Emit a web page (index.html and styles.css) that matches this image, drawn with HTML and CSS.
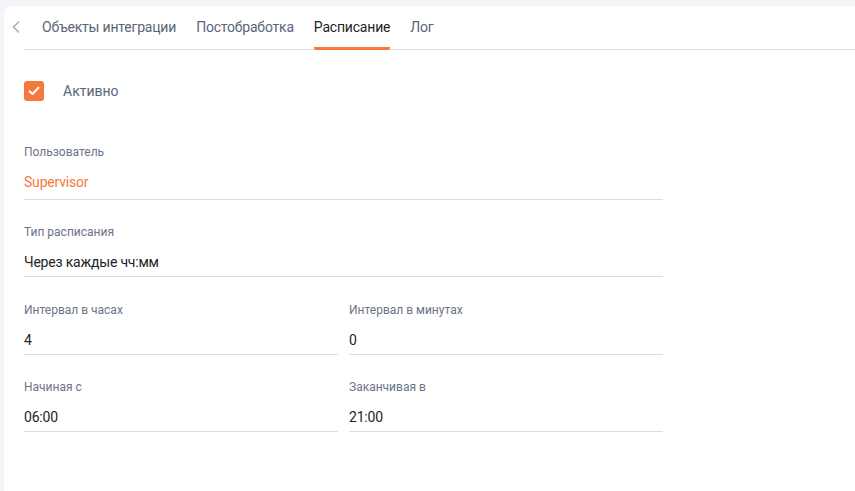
FILE: index.html
```html
<!DOCTYPE html>
<html lang="ru">
<head>
  <meta charset="UTF-8" />
  <title>Расписание</title>
  <link rel="stylesheet" href="styles.css">
</head>
<body>
  <div class="card">
    <div class="tabs-bar">
      <button class="tabs-back" type="button">
        <svg width="8" height="12" viewBox="0 0 8 12"><path d="M6.5 1 L1.5 6 L6.5 11" fill="none" stroke="#a9adb6" stroke-width="1.6" stroke-linecap="round" stroke-linejoin="round"/></svg>
      </button>
      <div class="tabs">
        <div class="tab">Объекты интеграции</div>
        <div class="tab">Постобработка</div>
        <div class="tab active">Расписание</div>
        <div class="tab">Лог</div>
      </div>
    </div>

    <div class="content">
      <label class="check">
        <span class="check-box">
          <svg width="12" height="10" viewBox="0 0 12 10"><path d="M1.5 5.2 L4.5 8 L10.5 1.8" fill="none" stroke="#fff" stroke-width="2" stroke-linecap="round" stroke-linejoin="round"/></svg>
        </span>
        <span class="check-label">Активно</span>
      </label>

      <div class="form">
        <div class="field select">
          <div class="field-label">Пользователь</div>
          <div class="field-value accent">Supervisor</div>
        </div>

        <div class="field">
          <div class="field-label">Тип расписания</div>
          <div class="field-value">Через каждые чч:мм</div>
        </div>

        <div class="row first-row">
          <div class="field">
            <div class="field-label">Интервал в часах</div>
            <div class="field-value">4</div>
          </div>
          <div class="field">
            <div class="field-label">Интервал в минутах</div>
            <div class="field-value">0</div>
          </div>
        </div>

        <div class="row">
          <div class="field">
            <div class="field-label">Начиная с</div>
            <div class="field-value">06:00</div>
          </div>
          <div class="field">
            <div class="field-label">Заканчивая в</div>
            <div class="field-value">21:00</div>
          </div>
        </div>
      </div>
    </div>
  </div>
</body>
</html>
```

FILE: styles.css
```css
body {
  margin: 0;
  background: #f4f5f9;
  font-family: Roboto, 'Liberation Sans', sans-serif;
  color: #1f2329;
}
.card {
  margin: 6px 0 0 4px;
  background: #fff;
  border-top-left-radius: 8px;
  min-height: 500px;
}
.tabs-bar {
  display: flex;
  align-items: stretch;
}
.tabs-back {
  width: 20px;
  padding: 0 0 3px 8px;
  border: none;
  background: none;
  display: flex;
  align-items: center;
  height: 44px;
  cursor: pointer;
}
.tabs {
  flex: 1;
  display: flex;
  gap: 20px;
  padding-left: 18px;
  border-bottom: 1px solid #dcdcdf;
}
.tab {
  font-size: 14px;
  line-height: 20px;
  letter-spacing: -0.2px;
  padding: 11px 0 9px;
  margin-bottom: -1px;
  border-bottom: 3px solid transparent;
  color: #5b6578;
  cursor: pointer;
}
.tab.active {
  color: #1f2329;
  border-bottom-color: #f5793b;
  border-radius: 2px;
}
.content {
  padding: 31px 0 40px 20px;
  width: 639px;
}
.check {
  display: flex;
  align-items: center;
  gap: 19px;
}
.check-box {
  width: 20px;
  height: 20px;
  border-radius: 3px;
  background: #f5793b;
  display: flex;
  align-items: center;
  justify-content: center;
}
.check-label {
  font-size: 14px;
  color: #5b6578;
}
.form {
  margin-top: 43px;
  display: flex;
  flex-direction: column;
  gap: 24px;
}
.row {
  display: grid;
  grid-template-columns: 1fr 1fr;
  gap: 11px;
}
.first-row {
  margin-top: 1px;
}
.field-label {
  font-size: 12px;
  line-height: 16px;
  color: #6b7486;
}
.field-value {
  font-size: 14px;
  line-height: 20px;
  letter-spacing: -0.2px;
  padding: 12px 0 4px;
  border-bottom: 1px solid #dcdde3;
}
.select .field-value {
  padding-bottom: 7px;
}
.field-value.accent {
  color: #f5793b;
}
```
